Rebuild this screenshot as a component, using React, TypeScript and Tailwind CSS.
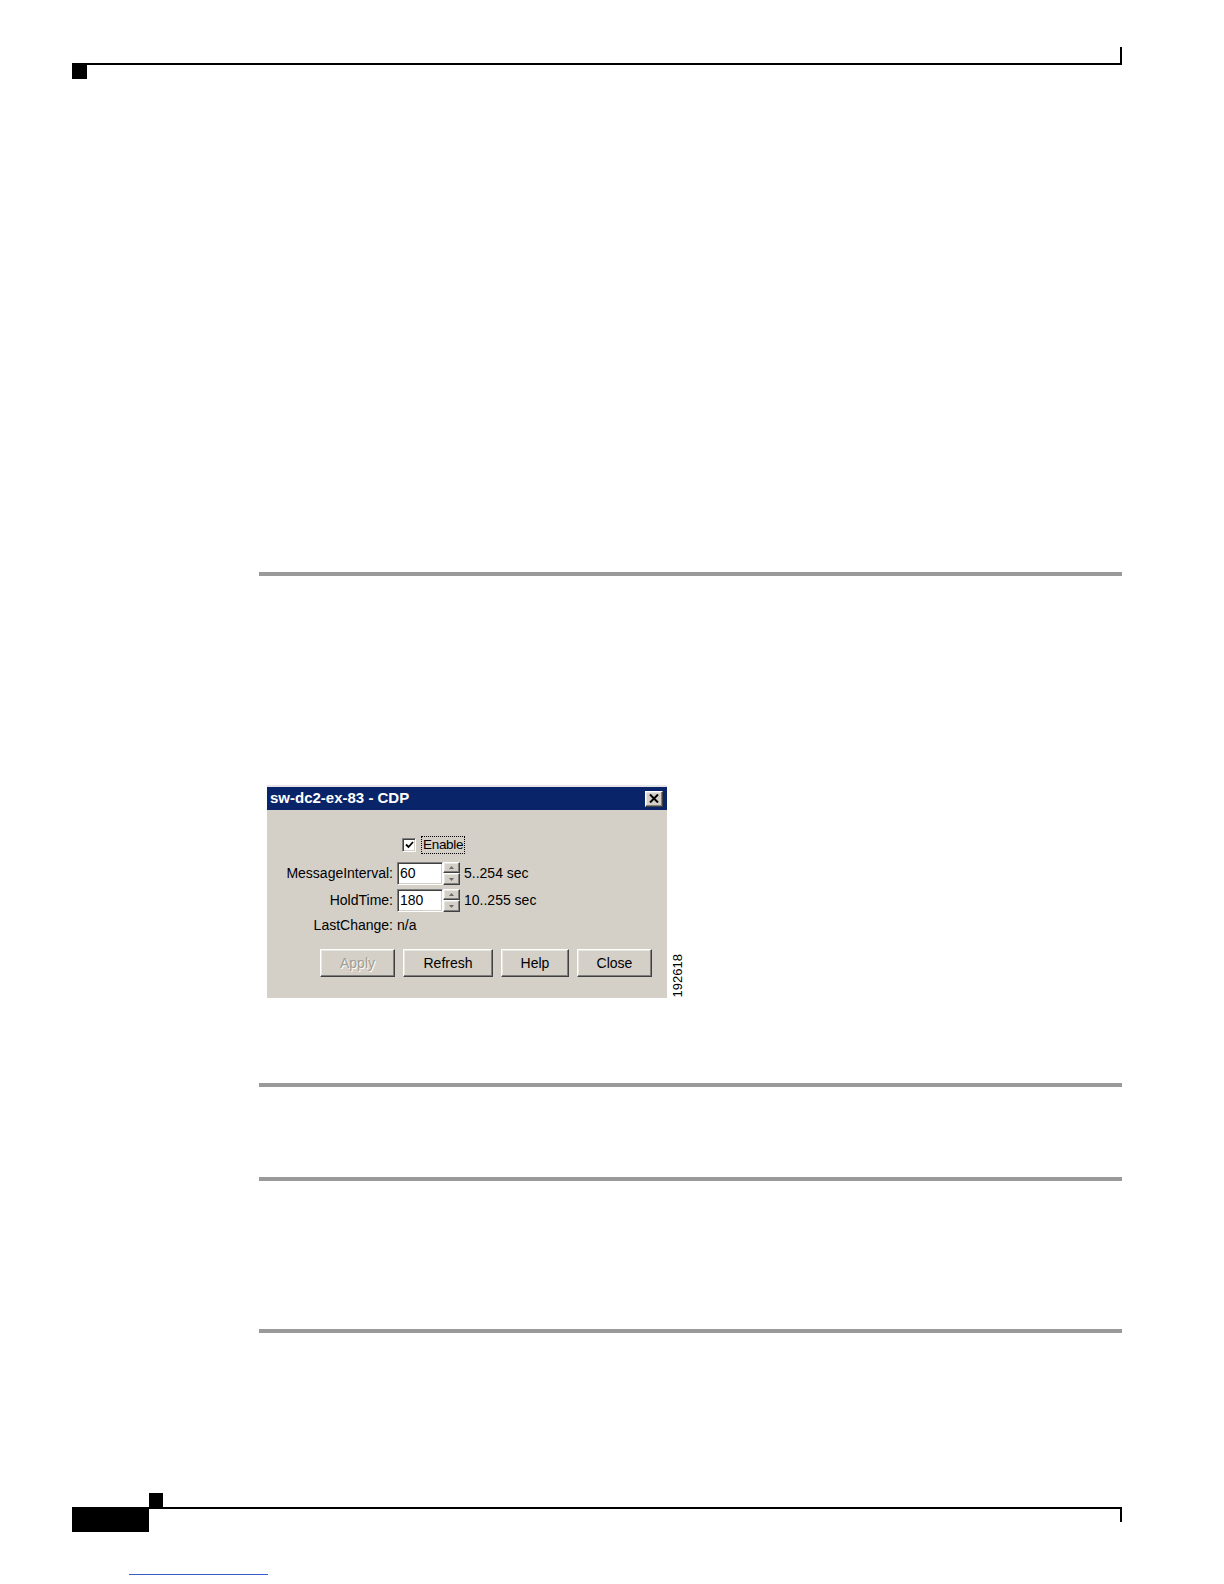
import React from 'react';

const ui = "font-['Liberation_Sans',Arial,sans-serif]";

const raised =
  'border border-t-white border-l-white border-r-[#404040] border-b-[#404040] shadow-[inset_-1px_-1px_0_#808080,inset_1px_1px_0_#e8e6e0]';
const sunken =
  'border border-t-[#808080] border-l-[#808080] border-r-white border-b-white shadow-[inset_1px_1px_0_#404040,inset_-1px_-1px_0_#d4d0c8]';

const Rule: React.FC<{ top: number }> = ({ top }) => (
  <div className="h-[4px] bg-[#9a9a9a]" style={{ marginTop: top }} />
);

const Spinner: React.FC = () => (
  <div className="flex h-[23px] w-[17px] flex-col">
    <div className={`flex h-[11px] items-center justify-center bg-[#d4d0c8] ${raised}`}>
      <svg width="5" height="3" viewBox="0 0 5 3">
        <path d="M2.5 0 L5 3 L0 3 Z" fill="#6b6b6b" />
      </svg>
    </div>
    <div className={`flex h-[12px] items-center justify-center bg-[#d4d0c8] ${raised}`}>
      <svg width="5" height="3" viewBox="0 0 5 3">
        <path d="M0 0 L5 0 L2.5 3 Z" fill="#6b6b6b" />
      </svg>
    </div>
  </div>
);

const NumberRow: React.FC<{ label: string; value: string; range: string }> = ({ label, value, range }) => (
  <div className="flex h-[23px] items-center">
    <div className="w-[126px] text-right">{label}</div>
    <div className={`ml-[4px] flex h-[23px] w-[46px] items-center bg-white pl-[2px] ${sunken}`}>{value}</div>
    <Spinner />
    <div className="ml-[4px]">{range}</div>
  </div>
);

const WinButton: React.FC<{ label: string; width: number; disabled?: boolean }> = ({ label, width, disabled }) => (
  <div
    className={`flex h-[28px] items-center justify-center bg-[#d4d0c8] ${raised} ${
      disabled ? 'text-[#a19d94] [text-shadow:1px_1px_0_#ffffff]' : 'text-black'
    }`}
    style={{ width }}
  >
    {label}
  </div>
);

const CdpDialog: React.FC = () => (
  <div className={`w-[400px] h-[213px] border-t-2 border-[#e6e6e6] bg-[#d4d0c8] text-[14px] text-black ${ui}`}>
    {/* title bar */}
    <div className="flex h-[23px] items-center justify-between bg-[#0a246a] pl-[3px] pr-[4px]">
      <span className="text-[15px] font-bold text-white">sw-dc2-ex-83 - CDP</span>
      <div className={`flex h-[16px] w-[18px] items-center justify-center bg-[#d4d0c8] ${raised}`}>
        <svg width="10" height="9" viewBox="0 0 10 9">
          <path d="M1 0.5 L9 8.5 M9 0.5 L1 8.5" stroke="#000" strokeWidth="2" />
        </svg>
      </div>
    </div>

    <div className="pt-[25px]">
      <div className="flex h-[20px] items-center pl-[135px]">
        <div className={`flex h-[14px] w-[14px] items-center justify-center bg-white ${sunken}`}>
          <svg width="9" height="8" viewBox="0 0 9 8">
            <path d="M1 3.5 L3.5 6 L8 1" stroke="#000" strokeWidth="1.8" fill="none" />
          </svg>
        </div>
        <div className="ml-[5px] border border-dotted border-black px-[1px] text-[13.5px] leading-[16px] tracking-[-0.3px]">
          Enable
        </div>
      </div>

      <div className="mt-[7px] flex flex-col gap-[4px]">
        <NumberRow label="MessageInterval:" value="60" range="5..254 sec" />
        <NumberRow label="HoldTime:" value="180" range="10..255 sec" />
        <div className="flex h-[18px] items-center">
          <div className="w-[126px] text-right">LastChange:</div>
          <div className="ml-[4px]">n/a</div>
        </div>
      </div>

      <div className="mt-[15px] flex gap-[8px] pl-[53px]">
        <WinButton label="Apply" width={75} disabled />
        <WinButton label="Refresh" width={90} />
        <WinButton label="Help" width={68} />
        <WinButton label="Close" width={75} />
      </div>
    </div>
  </div>
);

export default function App() {
  return (
    <div className="relative h-[1584px] w-[1224px] overflow-hidden bg-white">
      {/* running header */}
      <div className="pt-[47px]">
        <div className="ml-[72px] h-[18px] w-[1050px] border-b-2 border-r-2 border-black" />
        <div className="ml-[72px] h-[14px] w-[15px] bg-black" />
      </div>

      {/* body column */}
      <div className="ml-[259px] w-[863px]">
        <Rule top={493} />

        <div className="ml-[8px] mt-[209px] flex items-end">
          <CdpDialog />
          <div className={`mb-[1px] ml-[3px] rotate-180 text-[13px] leading-[15px] text-black [writing-mode:vertical-rl] ${ui}`}>
            192618
          </div>
        </div>

        <Rule top={85} />
        <Rule top={90} />
        <Rule top={148} />
      </div>

      {/* running footer */}
      <div className="ml-[149px] mt-[160px] h-[14px] w-[14px] bg-black" />
      <div className="flex items-start">
        <div className="ml-[72px] h-[25px] w-[77px] bg-black" />
        <div className="h-[15px] w-[973px] border-r-2 border-t-2 border-black" />
      </div>
      <div className="ml-[129px] mt-[42px] h-[1px] w-[139px] bg-[#3a5fcd]" />
    </div>
  );
}
